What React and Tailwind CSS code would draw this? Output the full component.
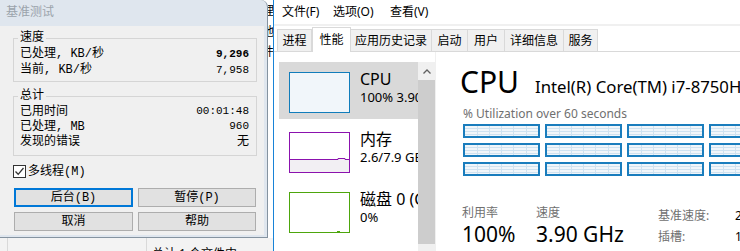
import React from 'react'

const UI = "font-['Noto_Sans','Noto_Sans_CJK_SC',sans-serif]"
const DLG = "font-['Liberation_Mono','Noto_Sans_CJK_SC',monospace]"

const Row = ({ label, value, bold, h }) => (
  <div className={`flex items-center justify-between whitespace-nowrap ${h}`}>
    <span>{label}</span>
    <span className={`text-[11px] ${bold ? 'font-bold' : ''}`}>{value}</span>
  </div>
)

const Group = ({ title, children, className }) => (
  <fieldset className={`border border-[#d5d5d5] p-0 ${className}`}>
    <legend className="ml-[4px] px-[2px] leading-[16px]">{title}</legend>
    {children}
  </fieldset>
)

const Btn = ({ children, focused, w }) => (
  <div
    className={`${w} h-[19px] flex items-center justify-center bg-[#e1e1e1] leading-none ${
      focused ? 'border-2 border-[#0078d7]' : 'border border-[#adadad]'
    }`}
  >
    {children}
  </div>
)

function Dialog() {
  return (
    <div className={`w-[268px] h-[238px] shrink-0 flex flex-col bg-[#dfe6ee] border-r border-b border-[#8593a0] rounded-tr-[7px] overflow-hidden ${DLG}`}>
      <div className="h-[26px] shrink-0 flex items-center pl-[6px] text-[12px] text-[#9ba3ab]">基准测试</div>
      <div className="flex-1 mr-[3px] mb-[2px] bg-[#f0f0f0] pt-[4px] pl-[13px] pr-[7px] text-[12px] text-black">
        <Group title="速度">
          <div className="pl-[6px] pr-[7px] pb-[3px]">
            <Row label="已处理, KB/秒" value="9,296" bold h="h-[16px]" />
            <Row label="当前, KB/秒" value="7,958" h="h-[16px]" />
          </div>
        </Group>
        <Group title="总计" className="mt-[6px]">
          <div className="pl-[6px] pr-[7px] pb-[6px]">
            <Row label="已用时间" value="00:01:48" h="h-[15px]" />
            <Row label="已处理, MB" value="960" h="h-[15px]" />
            <div className="flex items-center justify-between h-[15px]">
              <span>发现的错误</span>
              <span>无</span>
            </div>
          </div>
        </Group>
        <div className="mt-[9px] h-[13px] flex items-center gap-[2px]">
          <div className="w-[13px] h-[13px] border border-[#333] bg-white flex items-center justify-center">
            <svg width="11" height="11" viewBox="0 0 11 11">
              <path d="M1.5 5.5 L4.2 8.3 L9.5 2" fill="none" stroke="#333" strokeWidth="1.3" />
            </svg>
          </div>
          <span className="leading-none">多线程(M)</span>
        </div>
        <div className="mt-[10px] ml-[1px] flex gap-[5px]">
          <Btn focused w="w-[119px]">后台(B)</Btn>
          <Btn w="w-[118px]">暂停(P)</Btn>
        </div>
        <div className="mt-[5px] ml-[1px] flex gap-[5px]">
          <Btn w="w-[119px]">取消</Btn>
          <Btn w="w-[118px]">帮助</Btn>
        </div>
      </div>
    </div>
  )
}

const Tab = ({ label, w, active }) => (
  <div
    className={`${w} flex items-center justify-center text-[12px] border-t border-r border-[#d9d9d9] ${
      active ? 'h-[25px] -mb-px bg-white border-l' : 'h-[22px] bg-[#f0f0f0]'
    }`}
  >
    {label}
  </div>
)

const Thumb = ({ color, children, fill }) => (
  <div className={`w-[61px] h-[41px] shrink-0 border ${color} ${fill}`}>{children}</div>
)

const SideItem = ({ thumb, title, sub, selected }) => (
  <div className={`h-[57px] mb-[3px] flex overflow-hidden whitespace-nowrap ${selected ? 'bg-[#d9d9d9]' : ''}`}>
    <div className="pl-[10px] pt-[10px]">{thumb}</div>
    <div className="pl-[10px] pt-[7px]">
      <div className="text-[16px] leading-[20px]">{title}</div>
      <div className="text-[13px] leading-[17px]">{sub}</div>
    </div>
  </div>
)

const Cell = () => (
  <div className="w-[77px] h-[14px] shrink-0 border-2 border-[#1a7dbd] bg-[#f1f6fa]">
    <svg width="73" height="10" className="block">
      {[12, 24, 36, 48, 61].map((x) => (
        <line key={x} x1={x + 0.5} y1="0" x2={x + 0.5} y2="10" stroke="#cfe2f0" />
      ))}
      {[2.5, 5.5, 8.5].map((y) => (
        <line key={y} x1="0" y1={y} x2="73" y2={y} stroke="#cfe2f0" />
      ))}
    </svg>
  </div>
)

function TaskManager() {
  return (
    <div className={`flex-1 min-w-0 flex flex-col bg-white text-black ${UI}`}>
      <div className="h-[24px] shrink-0 flex items-center pl-[8px] text-[12px]">
        <span className="w-[51px]">文件(F)</span>
        <span className="w-[57px]">选项(O)</span>
        <span>查看(V)</span>
      </div>
      <div className="h-[2px] shrink-0 bg-[#f0f0f0]" />
      <div className="h-[26px] shrink-0 flex items-end pl-[3px] border-b border-[#d9d9d9]">
        <Tab label="进程" w="w-[35px] border-l" />
        <Tab label="性能" w="w-[39px]" active />
        <Tab label="应用历史记录" w="w-[81px]" />
        <Tab label="启动" w="w-[36px]" />
        <Tab label="用户" w="w-[37px]" />
        <Tab label="详细信息" w="w-[59px]" />
        <Tab label="服务" w="w-[34px]" />
      </div>
      <div className="flex flex-1 min-h-0">
        <div className="w-[139px] shrink-0 ml-[5px] pt-[10px]">
          <SideItem
            selected
            title="CPU"
            sub="100%  3.90 GHz"
            thumb={<Thumb color="border-[#117dbb]" fill="bg-[#f1f6fa]" />}
          />
          <SideItem
            title="内存"
            sub="2.6/7.9 GB (33%)"
            thumb={
              <Thumb color="border-[#8b12ae]" fill="bg-white">
                <svg width="59" height="39" className="block">
                  <path d="M0 26.5 H48 V25.5 H55 V26.5 H59 V39 H0 Z" fill="#f2eff3" />
                  <path d="M0 26.5 H48 V25.5 H55 V26.5 H59" fill="none" stroke="#8b12ae" />
                </svg>
              </Thumb>
            }
          />
          <SideItem
            title="磁盘 0 (C:)"
            sub="0%"
            thumb={
              <Thumb color="border-[#4da60c]" fill="bg-white">
                <svg width="59" height="39" className="block">
                  <line x1="47" y1="38.5" x2="50" y2="38.5" stroke="#4da60c" />
                </svg>
              </Thumb>
            }
          />
        </div>
        <div className="w-[17px] shrink-0 mt-[10px] flex flex-col bg-[#f0f0f0]">
          <div className="h-[18px] flex items-center justify-center">
            <svg width="8" height="5" viewBox="0 0 8 5">
              <path d="M0.5 4.5 L4 1 L7.5 4.5" fill="none" stroke="#606060" strokeWidth="1.3" />
            </svg>
          </div>
          <div className="h-[164px] bg-[#cdcdcd]" />
        </div>
        <div className="w-px shrink-0 bg-[#f0f0f0]" />
        <div className="flex-1 min-w-0 pl-[26px] pt-[10px] overflow-hidden whitespace-nowrap">
          <div className="flex items-baseline h-[40px]">
            <span className="w-[75px] shrink-0 -ml-[2px] text-[30px] leading-[40px]">CPU</span>
            <span className="shrink-0 text-[16.75px]">Intel(R) Core(TM) i7-8750H CPU @ 2.20GHz</span>
          </div>
          <div className="mt-[4px] ml-[1px] text-[12px] leading-[16px] text-[#707070]">% Utilization over 60 seconds</div>
          <div className="mt-[2px] ml-[1px] flex flex-col gap-[5px]">
            {[0, 1, 2].map((r) => (
              <div key={r} className="flex gap-[5px]">
                <Cell />
                <Cell />
                <Cell />
                <Cell />
              </div>
            ))}
          </div>
          <div className="mt-[29px] flex">
            <div className="w-[74px] shrink-0">
              <div className="text-[12px] leading-[16px] text-[#707070]">利用率</div>
              <div className="text-[21px] leading-[26px]">100%</div>
            </div>
            <div className="w-[122px] shrink-0">
              <div className="text-[12px] leading-[16px] text-[#707070]">速度</div>
              <div className="text-[21px] leading-[26px]">3.90 GHz</div>
            </div>
            <div className="shrink-0 text-[12px]">
              <div className="flex h-[21px] items-center">
                <span className="w-[77px] shrink-0 text-[#707070]">基准速度:</span>
                <span>2.21 GHz</span>
              </div>
              <div className="flex h-[21px] items-center">
                <span className="w-[77px] shrink-0 text-[#707070]">插槽:</span>
                <span>1</span>
              </div>
              <div className="flex h-[21px] items-center">
                <span className="w-[77px] shrink-0 text-[#707070]">内核:</span>
                <span>6</span>
              </div>
            </div>
          </div>
        </div>
      </div>
    </div>
  )
}

export default function App() {
  return (
    <div className="w-[740px] h-[251px] overflow-hidden flex bg-white">
      <div className="w-[273px] shrink-0 flex flex-col">
        <div className="flex h-[238px] shrink-0">
          <Dialog />
          <div className={`w-[5px] overflow-hidden bg-white text-[12px] leading-[20.5px] text-black pt-px ${UI}`}>
            <div className="-ml-[6px] w-[12px]">理</div>
            <div className="-ml-[6px] w-[12px]">地</div>
            <div className="-ml-[6px] w-[12px]">件</div>
          </div>
        </div>
        <div className={`flex-1 flex bg-[#f3f3f3] text-[12px] overflow-hidden ${UI}`}>
          <div className="w-[8px] border-r border-[#d9d9d9]" />
          <div className="w-[139px] border-r border-[#d9d9d9]" />
          <div className="pl-[5px] pt-[8px] leading-[16px] whitespace-nowrap">总计 1 个文件中</div>
        </div>
      </div>
      <div className="w-px shrink-0 bg-[#1883d7]" />
      <TaskManager />
    </div>
  )
}
